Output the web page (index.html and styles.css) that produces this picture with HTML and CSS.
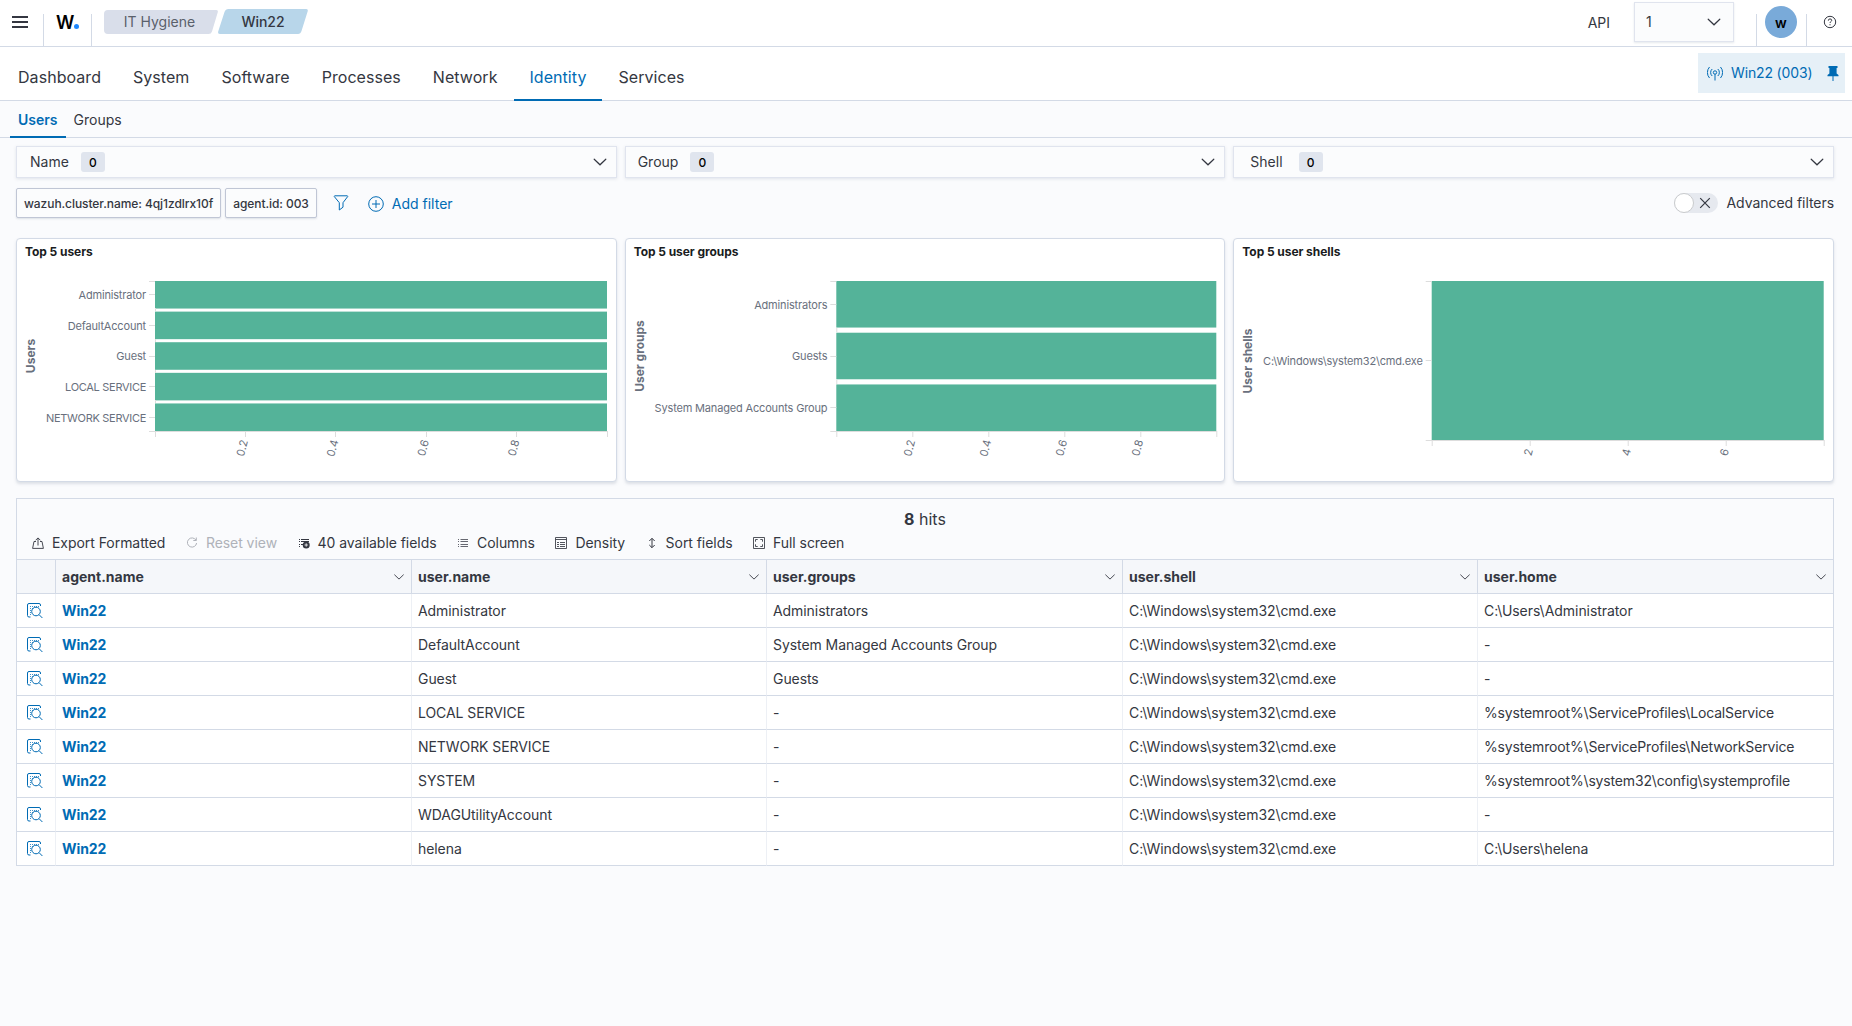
FILE: index.html
```html
<!DOCTYPE html>
<html lang="en">
<head>
    <meta charset="UTF-8">
    <meta name="viewport" content="width=device-width, initial-scale=1.0">
    <title>IT Hygiene - Win22</title>
    <link rel="stylesheet" href="styles.css">
</head>
<body>
    <svg class="sprite">
        <symbol id="chevron" viewBox="0 0 16 16"><path d="M2.2 5.2 8 10.8l5.8-5.6" fill="none" stroke="currentColor" stroke-width="1.2" stroke-linecap="round"/></symbol>
        <symbol id="inspect" viewBox="0 0 16 16">
            <g fill="none" stroke="currentColor">
                <path d="M3.5 14H2Q.5 14 .5 12.500V2Q.5.500 2 .5h10q1.500 0 1.500 1.500v1"/>
                <path d="M3 3.500h9M3 5.500h3M3 7.500h1M3 9.500h1M3 11.500h1" stroke-dasharray="1 1" stroke-opacity=".75"/>
                <circle cx="9" cy="8.500" r="4.300"/>
                <path d="m12.100 11.700 3.300 3.300"/>
            </g>
        </symbol>
    </svg>

    <header class="header">
        <button class="menu-btn"><span></span><span></span><span></span></button>
        <a class="logo">W<i></i></a>
        <nav class="breadcrumbs">
            <span class="crumb crumb-first">
                <svg width="114" height="24"><path d="M4 0h108q2.500 0 1.700 2.500L108 21.500q-.8 2.500-3.500 2.500H4q-4 0-4-4V4q0-4 4-4z"/></svg>
                <b>IT Hygiene</b>
            </span>
            <span class="crumb crumb-last">
                <svg width="90" height="25"><path d="M10.500 0H88q2.300 0 1.700 2.300L83.500 22q-.9 3-3.500 3H2.200q-2.700 0-2-2.500L6.500 3q1-3 4-3z"/></svg>
                <b>Win22</b>
            </span>
        </nav>
        <div class="header-right">
            <span class="api-label">API</span>
            <div class="api-select">1 <svg class="chev"><use href="#chevron"/></svg></div>
            <div class="user"><span class="avatar">w</span></div>
            <svg class="help" viewBox="0 0 14 14">
                <circle cx="7" cy="7" r="5.7" fill="none" stroke="currentColor"/>
                <path d="M5.300 5.700q0-1.800 1.700-1.800t1.700 1.500c0 1.200-1.700 1.200-1.700 2.600M7 9.200v1.100" fill="none" stroke="currentColor"/>
            </svg>
        </div>
    </header>

    <div class="main-nav">
        <nav class="tabs">
            <a class="tab">Dashboard</a>
            <a class="tab">System</a>
            <a class="tab">Software</a>
            <a class="tab">Processes</a>
            <a class="tab">Network</a>
            <a class="tab active">Identity</a>
            <a class="tab">Services</a>
        </nav>
        <div class="agent">
            <svg class="agent-icon" viewBox="0 0 16 16" fill="none" stroke="currentColor">
                <circle cx="8" cy="7.500" r="1.700"/>
                <path d="M8 9.200V15.500M5.200 11a4.700 4.700 0 0 1 0-7M10.800 11a4.700 4.700 0 0 0 0-7M2.500 13a8.300 8.300 0 0 1 0-11M13.500 13a8.300 8.300 0 0 0 0-11"/>
            </svg>
            <span>Win22 (003)</span>
            <svg class="agent-pin" viewBox="0 0 12 15" fill="currentColor"><path d="M1.500 0h9v2H9.600v5.500L11.500 9v1.200H6.500V15h-1v-4.800h-5V9l1.900-1.500V2h-.9z"/></svg>
        </div>
    </div>

    <nav class="subtabs">
        <a class="subtab active">Users</a>
        <a class="subtab">Groups</a>
    </nav>

    <main class="content">
        <div class="grid">
            <div class="select select-name">Name <span class="count">0</span><svg class="chev"><use href="#chevron"/></svg></div>
            <div class="select select-group">Group <span class="count">0</span><svg class="chev"><use href="#chevron"/></svg></div>
            <div class="select select-shell">Shell <span class="count">0</span><svg class="chev"><use href="#chevron"/></svg></div>
        </div>

        <div class="filters">
            <span class="pill">wazuh.cluster.name: 4qj1zdlrx10f</span>
            <span class="pill">agent.id: 003</span>
            <svg class="funnel" viewBox="0 0 16 16" fill="none" stroke="currentColor"><path d="M1.600.8h12.800q.6.300.2.900L10 7.700v4.500L6.300 15V7.700L1.400 1.700Q1 1.100 1.600.8z"/></svg>
            <a class="add-filter">
                <svg viewBox="0 0 16 16" fill="none" stroke="currentColor"><circle cx="8" cy="8" r="7.300"/><path d="M8 4v8M4 8h8"/></svg>
                Add filter
            </a>
            <label class="advanced">
                <span class="toggle"><i></i><svg viewBox="0 0 12 12"><path d="m1.200 1.200 9.600 9.600m0-9.600-9.600 9.600" stroke="currentColor" stroke-width="1.200"/></svg></span>
                Advanced filters
            </label>
        </div>

        <div class="grid">
            <section class="panel">
                <h2>Top 5 users</h2>
                <svg class="chart" width="598" height="210">
                    <g class="bars">
                        <rect x="138" y="10" width="452" height="27.550"/>
                        <rect x="138" y="40.610" width="452" height="27.550"/>
                        <rect x="138" y="71.220" width="452" height="27.550"/>
                        <rect x="138" y="101.840" width="452" height="27.550"/>
                        <rect x="138" y="132.450" width="452" height="27.550"/>
                    </g>
                    <path class="axis" d="M132 10.500h6M132 23.500h6M132 54.500h6M132 85.500h6M132 115.500h6M132 146.500h6M132 160.500h458.500M138.500 37v3M138.500 68v3M138.500 99v3M138.500 129v3M138.500 160v6M228.500 160v6M318.500 160v6M409.500 160v6M499.500 160v6M590.500 160v6"/>
                    <g class="names">
                        <text x="129" y="27.500">Administrator</text>
                        <text x="129" y="58.500">DefaultAccount</text>
                        <text x="129" y="88.500">Guest</text>
                        <text class="caps" x="129" y="119.500">LOCAL SERVICE</text>
                        <text class="caps" x="129" y="150.500">NETWORK SERVICE</text>
                    </g>
                    <g class="ticks">
                        <text transform="translate(231 170) rotate(-75)">0.2</text>
                        <text transform="translate(321.500 170) rotate(-75)">0.4</text>
                        <text transform="translate(412 170) rotate(-75)">0.6</text>
                        <text transform="translate(502.500 170) rotate(-75)">0.8</text>
                    </g>
                    <text class="axis-title" transform="translate(18 85) rotate(-90)">Users</text>
                </svg>
            </section>
            <section class="panel">
                <h2>Top 5 user groups</h2>
                <svg class="chart" width="598" height="210">
                    <g class="bars">
                        <rect x="210.300" y="10" width="380" height="46.550"/>
                        <rect x="210.300" y="61.720" width="380" height="46.550"/>
                        <rect x="210.300" y="113.450" width="380" height="46.550"/>
                    </g>
                    <path class="axis" d="M204.300 10.500h6M204.300 33.500h6M204.300 85.500h6M204.300 136.500h6M204.300 160.500h386.500M210.800 57v4M210.800 109v4M210.800 160v6M286.800 160v6M362.800 160v6M438.800 160v6M514.800 160v6M590.800 160v6"/>
                    <g class="names">
                        <text x="201.300" y="37.500">Administrators</text>
                        <text x="201.300" y="88.500">Guests</text>
                        <text x="201.300" y="140.500">System Managed Accounts Group</text>
                    </g>
                    <g class="ticks">
                        <text transform="translate(289.300 170) rotate(-75)">0.2</text>
                        <text transform="translate(365.300 170) rotate(-75)">0.4</text>
                        <text transform="translate(441.300 170) rotate(-75)">0.6</text>
                        <text transform="translate(517.300 170) rotate(-75)">0.8</text>
                    </g>
                    <text class="axis-title" transform="translate(18 85) rotate(-90)">User groups</text>
                </svg>
            </section>
            <section class="panel">
                <h2>Top 5 user shells</h2>
                <svg class="chart" width="598" height="210">
                    <g class="bars"><rect x="197.700" y="10" width="392" height="159"/></g>
                    <path class="axis" d="M191.700 10.500h6M191.700 89.500h6M191.700 169.500h398.500M198.200 169v6M296.200 169v6M394.200 169v6M492.200 169v6M590.200 169v6"/>
                    <g class="names"><text x="188.700" y="93.500">C:\Windows\system32\cmd.exe</text></g>
                    <g class="ticks">
                        <text transform="translate(299 179) rotate(-75)">2</text>
                        <text transform="translate(397 179) rotate(-75)">4</text>
                        <text transform="translate(495 179) rotate(-75)">6</text>
                    </g>
                    <text class="axis-title" transform="translate(18 90) rotate(-90)">User shells</text>
                </svg>
            </section>
        </div>

        <section class="results">
            <div class="hits"><b>8</b> hits</div>
            <div class="toolbar">
                <button>
                    <svg viewBox="0 0 12 12" fill="none" stroke="currentColor"><path d="M4 4.500H2L.6 11.400h10.800L10 4.500H8M6 8.500V1M3.600 3.300 6 .9l2.400 2.400" stroke-width=".9"/></svg>
                    Export Formatted
                </button>
                <button class="disabled">
                    <svg viewBox="0 0 12 12" fill="none" stroke="currentColor"><path d="M10 3.200A4.600 4.600 0 1 0 10.600 6M10.300.5v3h-3"/></svg>
                    Reset view
                </button>
                <button>
                    <svg viewBox="0 0 12 12" fill="none" stroke="currentColor"><path d="M1 2.500h1M3 2.500h8M1 4.500h1M3 4.500h8M1 7.500h1M3 7.500h2M1 9.500h1"/><circle cx="8.200" cy="8" r="3.500" fill="currentColor" stroke="none"/><path d="M8.200 6.300v3.400M6.500 8h3.400" stroke="#fff" stroke-width=".8"/></svg>
                    40 available fields
                </button>
                <button>
                    <svg viewBox="0 0 12 12" fill="none" stroke="currentColor"><path d="M1 2.500h1M3.500 2.500H11M1 4.500h1M3.500 4.500H11M1 7.500h1M3.500 7.500H11M1 9.500h1M3.500 9.500H11" stroke-opacity=".75"/></svg>
                    Columns
                </button>
                <button>
                    <svg viewBox="0 0 12 12" fill="none" stroke="currentColor"><path d="M.5.500h11v11H.5zM.5 2.500h11M2 5.500h2M5 5.500h5M2 7.500h2M5 7.500h5M2 9.500h2M5 9.500h5" stroke-opacity=".85"/></svg>
                    Density
                </button>
                <button>
                    <svg viewBox="0 0 12 12" fill="none" stroke="currentColor"><path d="M6 1.500v9M3.300 4 6 1.300 8.700 4M3.300 8 6 10.700 8.700 8"/></svg>
                    Sort fields
                </button>
                <button>
                    <svg viewBox="0 0 12 12" fill="none" stroke="currentColor"><path d="M.5.500h11v11H.5zM2.500 4.700V2.500h2.200M7.300 2.500h2.200v2.200M9.500 7.300v2.200H7.300M4.700 9.500H2.500V7.300" stroke-opacity=".85"/></svg>
                    Full screen
                </button>
            </div>
            <table class="data">
                <colgroup><col class="c-icon"><col class="c-a"><col class="c-b"><col class="c-a"><col class="c-b"><col></colgroup>
                <thead>
                    <tr>
                        <th></th>
                        <th>agent.name<svg><use href="#chevron"/></svg></th>
                        <th>user.name<svg><use href="#chevron"/></svg></th>
                        <th>user.groups<svg><use href="#chevron"/></svg></th>
                        <th>user.shell<svg><use href="#chevron"/></svg></th>
                        <th>user.home<svg><use href="#chevron"/></svg></th>
                    </tr>
                </thead>
                <tbody>
                    <tr><td><svg><use href="#inspect"/></svg></td><td><a>Win22</a></td><td>Administrator</td><td>Administrators</td><td>C:\Windows\system32\cmd.exe</td><td>C:\Users\Administrator</td></tr>
                    <tr><td><svg><use href="#inspect"/></svg></td><td><a>Win22</a></td><td>DefaultAccount</td><td>System Managed Accounts Group</td><td>C:\Windows\system32\cmd.exe</td><td>-</td></tr>
                    <tr><td><svg><use href="#inspect"/></svg></td><td><a>Win22</a></td><td>Guest</td><td>Guests</td><td>C:\Windows\system32\cmd.exe</td><td>-</td></tr>
                    <tr><td><svg><use href="#inspect"/></svg></td><td><a>Win22</a></td><td>LOCAL SERVICE</td><td>-</td><td>C:\Windows\system32\cmd.exe</td><td class="env-path">%systemroot%\ServiceProfiles\LocalService</td></tr>
                    <tr><td><svg><use href="#inspect"/></svg></td><td><a>Win22</a></td><td>NETWORK SERVICE</td><td>-</td><td>C:\Windows\system32\cmd.exe</td><td class="env-path">%systemroot%\ServiceProfiles\NetworkService</td></tr>
                    <tr><td><svg><use href="#inspect"/></svg></td><td><a>Win22</a></td><td>SYSTEM</td><td>-</td><td>C:\Windows\system32\cmd.exe</td><td class="env-path">%systemroot%\system32\config\systemprofile</td></tr>
                    <tr><td><svg><use href="#inspect"/></svg></td><td><a>Win22</a></td><td>WDAGUtilityAccount</td><td>-</td><td>C:\Windows\system32\cmd.exe</td><td>-</td></tr>
                    <tr><td><svg><use href="#inspect"/></svg></td><td><a>Win22</a></td><td>helena</td><td>-</td><td>C:\Windows\system32\cmd.exe</td><td>C:\Users\helena</td></tr>
                </tbody>
            </table>
        </section>
    </main>
</body>
</html>
```
FILE: styles.css
```css
* {
    box-sizing: border-box;
}
body {
    margin: 0;
    min-height: 100vh;
    background-color: #fafbfd;
    color: #343741;
    font-family: Inter, "Liberation Sans", sans-serif;
    font-size: 14px;
    line-height: 20px;
}
svg {
    display: block;
    flex: none;
}
button {
    border: none;
    background: none;
    padding: 0;
    font: inherit;
    letter-spacing: inherit;
    color: inherit;
    cursor: pointer;
}
.sprite {
    width: 0;
    height: 0;
    position: absolute;
}
.chev {
    width: 16px;
    height: 16px;
}

/* header */
.header {
    display: flex;
    height: 47px;
    background-color: #fff;
    border-bottom: 1px solid #d3dae6;
}
.menu-btn {
    display: flex;
    flex-direction: column;
    width: 43px;
    padding: 16px 0 0 12px;
}
.menu-btn span {
    display: block;
    width: 16px;
    height: 2px;
    margin-bottom: 3px;
    background-color: #343741;
}
.logo {
    display: flex;
    align-items: flex-start;
    width: 49px;
    height: 32px;
    margin-top: 14px;
    padding-left: 12px;
    border-left: 1px solid #d3dae6;
    border-right: 1px solid #d3dae6;
    color: #000;
    font-size: 18px;
    font-weight: 600;
    line-height: 17px;
}
.logo i {
    width: 5px;
    height: 5px;
    margin: 10px 0 0 0;
    border-radius: 50%;
    background-color: #1e88ff;
}
.breadcrumbs {
    display: flex;
    align-items: flex-start;
    padding: 9px 0 0 12px;
}
.crumb {
    display: grid;
    align-items: center;
    justify-items: center;
}
.crumb > * {
    grid-area: 1 / 1;
}
.crumb b {
    padding-top: 1px;
    font-weight: 500;
}
.crumb-first {
    margin-top: 1px;
    color: #5a606b;
}
.crumb-first b {
    padding: 0 3px 0 0;
    font-weight: 400;
}
.crumb-first svg {
    fill: #d9deea;
}
.crumb-last svg {
    fill: #b8d6ea;
}
.header-right {
    display: flex;
    margin-left: auto;
}
.api-label {
    margin: 13px 24px 0 0;
}
.api-select {
    display: flex;
    align-items: center;
    justify-content: space-between;
    width: 100px;
    height: 40px;
    margin: 2px 22px 0 0;
    padding: 0 11px;
    background-color: #fbfcfd;
    border: 1px solid #e0e4ee;
    box-shadow: 0 1px 2px rgba(152, 162, 179, .25);
}
.user {
    width: 51px;
    height: 32px;
    margin-top: 14px;
    border-left: 1px solid #d3dae6;
    border-right: 1px solid #d3dae6;
}
.avatar {
    display: block;
    width: 32px;
    height: 32px;
    margin: -8px 0 0 8px;
    border-radius: 50%;
    background-color: #79aad9;
    color: #000;
    font-weight: 600;
    line-height: 33px;
    text-align: center;
}
.help {
    width: 14px;
    height: 14px;
    margin: 15px 15px 0 16px;
}

/* navigation */
.main-nav {
    display: flex;
    justify-content: space-between;
    height: 54px;
    padding: 0 7px 0 2px;
    background-color: #fff;
    border-bottom: 1px solid #d3dae6;
}
.tabs {
    display: flex;
    font-size: 16px;
    letter-spacing: .05px;
}
.tab {
    height: 54px;
    padding: 20px 16px 0;
}
.tab.active, .subtab.active {
    color: #006bb4;
    border-bottom: 2px solid #006bb4;
}
.agent {
    display: flex;
    align-items: center;
    width: 147px;
    height: 40px;
    margin-top: 6px;
    padding: 0 6px 0 9px;
    background-color: #e6f0f7;
    color: #006bb4;
    letter-spacing: -.15px;
}
.agent-icon {
    width: 16px;
    height: 16px;
    margin-right: 8px;
}
.agent-pin {
    width: 12px;
    height: 15px;
    margin-left: auto;
}
.subtabs {
    display: flex;
    height: 37px;
    padding-left: 10px;
    border-bottom: 1px solid #d3dae6;
}
.subtab {
    height: 37px;
    padding: 9px 8px 0;
}
.subtab.active {
    font-weight: 600;
}

/* filters */
.content {
    padding: 8px 18px 0 16px;
}
.grid {
    display: grid;
    grid-template-columns: repeat(3, 1fr);
    gap: 8px;
}
.select {
    display: flex;
    align-items: center;
    height: 32px;
    padding: 0 8px 0 13px;
    background-color: #fbfcfd;
    border: 1px solid #e0e4ee;
    box-shadow: 0 1px 3px rgba(152, 162, 179, .25);
}
.select-group {
    padding-left: 12px;
}
.select-shell {
    padding-left: 16px;
}
.count {
    width: 24px;
    height: 20px;
    margin-left: 12px;
    border-radius: 3px;
    background-color: #e0e5ee;
    color: #000;
    font-size: 12px;
    font-weight: 500;
    line-height: 21px;
    text-align: center;
}
.select-shell .count {
    margin-left: 16px;
}
.select .chev {
    margin-left: auto;
}
.filters {
    display: flex;
    align-items: center;
    height: 30px;
    margin: 10px 0 20px;
}
.pill {
    height: 30px;
    margin-right: 4px;
    padding: 0 7px;
    border: 1px solid #c0c6d5;
    border-radius: 2px;
    box-shadow: 0 1px 2px rgba(152, 162, 179, .3);
    background-color: #fbfcfd;
    font-size: 12px;
    font-weight: 500;
    letter-spacing: -.07px;
    line-height: 30px;
}
.funnel {
    width: 16px;
    height: 16px;
    margin: 0 19px 0 12px;
    color: #006bb4;
}
.add-filter {
    display: flex;
    align-items: center;
    gap: 8px;
    padding-top: 1px;
    color: #006bb4;
}
.add-filter svg {
    width: 16px;
    height: 16px;
}
.advanced {
    display: flex;
    align-items: center;
    gap: 8px;
    height: 28px;
    margin: -1px 0 0 auto;
    letter-spacing: -.05px;
}
.toggle {
    display: flex;
    align-items: center;
    width: 44px;
    height: 20px;
    border-radius: 10px;
    background-color: #e6e9ef;
}
.toggle i {
    width: 20px;
    height: 20px;
    margin-right: 5px;
    border: 1px solid #c9cbcd;
    border-radius: 50%;
    background-color: #fff;
}
.toggle svg {
    width: 12px;
    height: 12px;
}

/* charts */
.panel {
    height: 244px;
    overflow: hidden;
    background-color: #fff;
    border: 1px solid #d3dae6;
    border-radius: 4px;
    box-shadow: 0 2px 3px rgba(152, 162, 179, .3);
}
.panel h2 {
    margin: 0;
    padding: 3px 8px 9px;
    color: #1a1c21;
    font-size: 12px;
    font-weight: 700;
    letter-spacing: -.06px;
    line-height: 20px;
}
.bars {
    fill: #54b399;
}
.axis {
    fill: none;
    stroke: #ddd;
}
.names {
    fill: #69707d;
    font-size: 11px;
    letter-spacing: -.17px;
    text-anchor: end;
}
.names .caps {
    letter-spacing: -.3px;
}
.ticks {
    fill: #69707d;
    font-size: 11px;
    text-anchor: end;
}
.axis-title {
    fill: #69707d;
    font-size: 12px;
    font-weight: 700;
    text-anchor: middle;
}

/* results table */
.results {
    margin-top: 16px;
    border: 1px solid #d3dae6;
    border-bottom: none;
}
.hits {
    height: 32px;
    padding-top: 10px;
    font-size: 16px;
    text-align: center;
}
.hits b {
    font-weight: 700;
}
.toolbar {
    display: flex;
    gap: 20.5px;
    height: 28px;
    padding: 2px 0 0 15px;
    letter-spacing: -.05px;
}
.toolbar button {
    display: flex;
    align-items: center;
    gap: 8px;
    height: 20px;
}
.toolbar svg {
    width: 12px;
    height: 12px;
}
.toolbar .disabled {
    color: #afb2b9;
}
.data {
    width: 100%;
    table-layout: fixed;
    border-spacing: 0;
    background-color: #fff;
}
.c-icon {
    width: 39px;
}
.c-a {
    width: 356px;
}
.c-b {
    width: 355px;
}
.data th {
    height: 35px;
    padding: 0 6px;
    background-color: #f5f7fa;
    border: solid #d3dae6;
    border-width: 1px 1px 1px 0;
    font-weight: 700;
    text-align: left;
}
.data th svg {
    float: right;
    width: 12px;
    height: 12px;
    margin: 4px 0 0;
}
.data td {
    height: 34px;
    padding: 0 6px;
    border-right: 1px solid #edf0f5;
    border-bottom: 1px solid #d3dae6;
    letter-spacing: -.07px;
}
.data .env-path {
    letter-spacing: -.16px;
}
.data th:last-child, .data td:last-child {
    border-right: none;
}
.data td:first-child {
    padding-left: 10px;
}
.data td svg {
    width: 16px;
    height: 16px;
    color: #006bb4;
}
.data td a {
    color: #006bb4;
    font-weight: 700;
}
```
